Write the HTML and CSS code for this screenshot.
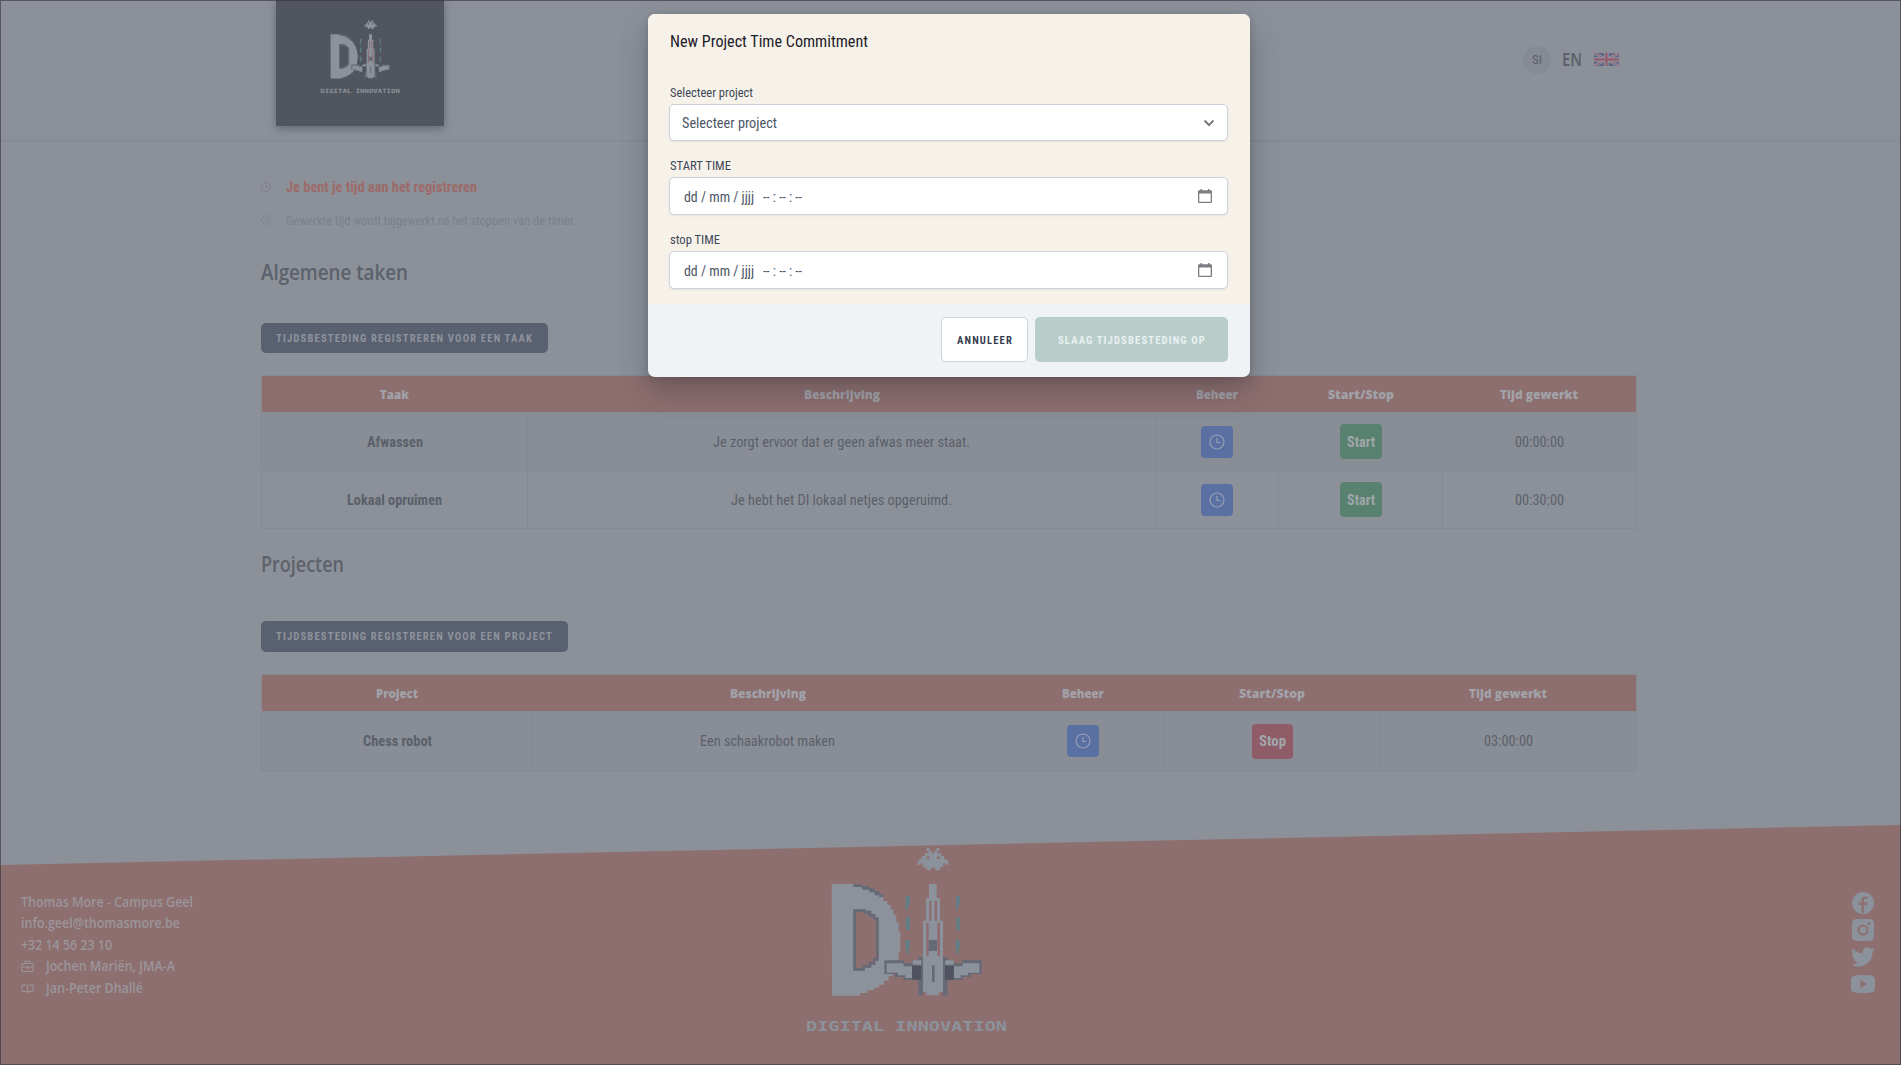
FILE: index.html
```html
<!DOCTYPE html>
<html lang="nl">
<head>
<meta charset="utf-8">
<title>Digital Innovation</title>
<link rel="stylesheet" href="styles.css">
</head>
<body>
<svg class="defs" aria-hidden="true">
  <symbol id="logo" viewBox="0 0 780 675">
    <path class="logo-fill" fill-rule="evenodd" d="M155 192h65v6h25v7h22v8h16v9h14v9h13v12h12v12h10v14h9v16h8v22h7v28h5v60h-5v25h-8v30h-10v18h-12v14h-14v12h-15v9h-15v8h-20v8h-22v8h-84zM220 268v184h34v-9h20v-9h12v-12h10v-130h-10v-10h-12v-10h-16v-4z"/>
    <path class="logo-line" fill-rule="evenodd" d="M220 268h38v4h16v10h12v10h10v130h-10v12h-12v9h-20v9h-34zM228 276v168h20v-9h18v-9h14v-12h8v-114h-8v-10h-14v-9h-14v-5z"/>
    <path class="logo-line" d="M220 193h27v5h21v7h16v8h14v9h12v9h-12v-5h-14v-9h-16v-8h-21v-8h-27z"/>
    <path class="logo-line" d="M313 421h60v9h25v-9h17v-10h15v115h-15v-46h-45v-9h-25v-9h-32zM605 421h-60v9h-25v-9h-18v-10h-14v115h15v-46h45v-9h25v-9h32z"/>
    <path class="logo-dark" d="M396 437h28v42h-28zM495 437h26v42h-26z"/>
    <path class="logo-fill" d="M320 430h50v9h26v35h-20v-8h-22v-8h-34zM598 430h-50v9h-26v35h20v-8h22v-8h34zM398 421h26v13h-26zM496 421h25v13h-25z"/>
    <path class="logo-fill" d="M447 192h23v42h10v68h9v214h-11v10h-39v-10h-10v-214h9v-68h9z"/>
    <path class="logo-slot" d="M448 242h6v60h-6zM464 242h7v60h-7zM439 308h7v100h-7zM472 308h8v100h-8z"/>
    <path class="logo-line" d="M446 360h25v33h-25z"/><path class="logo-line" d="M456 436h8v50h-8z"/>
    <path class="logo-laser" d="M378 227h11v28h-5v14h-7zM378 292h11v38h-11zM376 360h13v28h-4v14h-6zM529 227h10v28h-5v14h-6zM529 292h10v38h-10zM527 360h12v28h-4v14h-6z"/>
    <path class="logo-fill" fill-rule="evenodd" d="M440 84H449V92H455V100H463V92H469V84H478V94H472V100H484V108H492V117H500V122H505V134H496V130H490V140H484V143H434V140H428V130H422V134H413V122H418V117H426V108H434V100H446V94H440zM440 109v8h8v-8zM471 109v8h8v-8zM440 143h13v8h-13zM466 143h14v8h-14z"/>
    <text class="logo-text" x="78" y="634" textLength="603" lengthAdjust="spacingAndGlyphs">DIGITAL INNOVATION</text>
  </symbol>
  <symbol id="clock" viewBox="0 0 16 16"><path fill="none" stroke="currentColor" stroke-width="1.2" d="M8 1a7 7 0 1 0 0 14A7 7 0 0 0 8 1M8 4v4.5h3.5"/></symbol>
  <symbol id="calendar" viewBox="0 0 14 14"><path fill="currentColor" fill-rule="evenodd" d="M2.5 0h1.5v1.3h6V0h1.500v1.300H13q1 0 1 1V13q0 1-1 1H1q-1 0-1-1V2.300q0-1 1-1h1.500zM1.300 4.500v8.200h11.400V4.500z"/></symbol>
</svg>

<div class="page">
  <header class="topbar">
    <a class="brand"><svg class="brand-logo"><use href="#logo"/></svg></a>
    <nav class="account">
      <span class="avatar"><span data-w="10">SI</span></span>
      <span class="lang" data-w="20">EN</span>
      <svg class="flag" viewBox="0 0 25 13"><path fill="#5f6482" d="M0 0h25v13H0z"/><path stroke="#9297a0" stroke-width="2.600" d="M0 0l25 13M25 0L0 13"/><path stroke="#955f70" d="M0 0l25 13M25 0L0 13"/><path stroke="#9297a0" stroke-width="4.500" d="M12.500 0v13M0 6.500h25"/><path stroke="#935f70" stroke-width="2.400" d="M12.500 0v13M0 6.500h25"/></svg>
    </nav>
  </header>

  <main class="content">
    <p class="note active"><svg><use href="#clock"/></svg><span data-w="191">Je bent je tijd aan het registreren</span></p>
    <p class="note hint"><svg><use href="#clock"/></svg><span data-w="290">Gewerkte tijd wordt bijgewerkt na het stoppen van de timer.</span></p>

    <h2><span data-w="147">Algemene taken</span></h2>
    <button class="register"><span data-w="257">TIJDSBESTEDING REGISTREREN VOOR EEN TAAK</span></button>
    <table>
      <colgroup><col class="t1"><col class="t2"><col class="t3"><col class="t4"><col></colgroup>
      <thead><tr><th><span data-w="29">Taak</span></th><th><span data-w="76">Beschrijving</span></th><th><span data-w="42">Beheer</span></th><th><span data-w="66">Start/Stop</span></th><th><span data-w="78">Tijd gewerkt</span></th></tr></thead>
      <tbody>
        <tr><td class="name"><span data-w="56">Afwassen</span></td><td><span data-w="257">Je zorgt ervoor dat er geen afwas meer staat.</span></td><td><button class="manage"><svg><use href="#clock"/></svg></button></td><td><button class="toggle start"><span data-w="28">Start</span></button></td><td><span data-w="49">00:00:00</span></td></tr>
        <tr><td class="name"><span data-w="95">Lokaal opruimen</span></td><td><span data-w="221">Je hebt het DI lokaal netjes opgeruimd.</span></td><td><button class="manage"><svg><use href="#clock"/></svg></button></td><td><button class="toggle start"><span data-w="28">Start</span></button></td><td><span data-w="49">00:30:00</span></td></tr>
      </tbody>
    </table>

    <h2 class="second"><span data-w="83">Projecten</span></h2>
    <button class="register"><span data-w="277">TIJDSBESTEDING REGISTREREN VOOR EEN PROJECT</span></button>
    <table class="projects">
      <colgroup><col class="p1"><col class="p2"><col class="p3"><col class="p4"><col></colgroup>
      <thead><tr><th><span data-w="42">Project</span></th><th><span data-w="76">Beschrijving</span></th><th><span data-w="42">Beheer</span></th><th><span data-w="66">Start/Stop</span></th><th><span data-w="78">Tijd gewerkt</span></th></tr></thead>
      <tbody>
        <tr><td class="name"><span data-w="69">Chess robot</span></td><td><span data-w="135">Een schaakrobot maken</span></td><td><button class="manage"><svg><use href="#clock"/></svg></button></td><td><button class="toggle stop"><span data-w="27">Stop</span></button></td><td><span data-w="49">03:00:00</span></td></tr>
      </tbody>
    </table>
  </main>

  <footer class="footer">
    <ul class="contact">
      <li><span data-w="172">Thomas More - Campus Geel</span></li>
      <li><span data-w="159">info.geel@thomasmore.be</span></li>
      <li><span data-w="91">+32 14 56 23 10</span></li>
      <li><svg viewBox="0 0 13 12"><path fill="none" stroke="currentColor" d="M1 3.500h11v8H1zM4 3V1h5v2M1 7h11M5 8h3"/></svg><span data-w="129">Jochen Mariën, JMA-A</span></li>
      <li><svg viewBox="0 0 13 12"><path fill="none" stroke="currentColor" d="M1 9.500V3h3.500q2 0 2 1.500Q6.500 3 8.500 3H12v6.500H8l-1.500 1L5 9.500zM6.500 5v5"/></svg><span data-w="97">Jan-Peter Dhallé</span></li>
    </ul>
    <svg class="footer-logo"><use href="#logo"/></svg>
    <div class="social">
      <svg viewBox="0 0 24 24"><path fill-rule="evenodd" d="M12 1a11 11 0 1 0 0 22A11 11 0 0 0 12 1zM10.500 22v-8H7.500v-2.500h3V9q0-3.500 3.500-3.500h2.500v2.200H14.500q-1.700 0-1.700 1.700v2.100h3.500L15.900 14h-3.100v8z"/></svg>
      <svg viewBox="0 0 24 24"><path fill-rule="evenodd" d="M6 1h12q5 0 5 5v12q0 5-5 5H6q-5 0-5-5V6q0-5 5-5zm6 5.500a5.500 5.500 0 1 0 0 11 5.500 5.500 0 0 0 0-11zm0 2a3.500 3.500 0 1 1 0 7 3.500 3.500 0 0 1 0-7zM18 4a1.500 1.500 0 1 0 0 3 1.500 1.500 0 0 0 0-3z"/></svg>
      <svg viewBox="0 0 24 24"><path d="M24 4.600a10 10 0 0 1-2.800.8 5 5 0 0 0 2.100-2.700 10 10 0 0 1-3.100 1.200 4.900 4.900 0 0 0-8.400 4.500A14 14 0 0 1 1.700 3.200a4.900 4.900 0 0 0 1.500 6.500A5 5 0 0 1 1 9.100a4.900 4.900 0 0 0 3.900 4.900 5 5 0 0 1-2.200.1 4.900 4.900 0 0 0 4.600 3.400A9.900 9.900 0 0 1 0 19.500 14 14 0 0 0 21.500 7.100 10 10 0 0 0 24 4.600z"/></svg>
      <svg viewBox="0 0 24 24"><path fill-rule="evenodd" d="M4 3.500q8-1 16 0 4 .5 4 4.500v8q0 4-4 4.500-8 1-16 0-4-.5-4-4.500V8q0-4 4-4.500zM9.500 8v8l6.500-4z"/></svg>
    </div>
  </footer>
</div>

<div class="frame"></div>

<section class="modal">
  <div class="modal-body">
    <h1><span data-w="198">New Project Time Commitment</span></h1>
    <label><span data-w="83">Selecteer project</span></label>
    <div class="field select"><span data-w="95">Selecteer project</span><svg class="chevron" viewBox="0 0 12 8"><path fill="none" stroke="currentColor" stroke-width="2" d="M1.500 1.500L6 6l4.500-4.500"/></svg></div>
    <label><span data-w="61">START TIME</span></label>
    <div class="field date"><span data-w="70">dd / mm / jjjj</span><span class="time" data-w="39">-- : -- : --</span><svg class="cal"><use href="#calendar"/></svg></div>
    <label><span data-w="50">stop TIME</span></label>
    <div class="field date"><span data-w="70">dd / mm / jjjj</span><span class="time" data-w="39">-- : -- : --</span><svg class="cal"><use href="#calendar"/></svg></div>
  </div>
  <div class="modal-actions">
    <button class="cancel"><span data-w="56">ANNULEER</span></button>
    <button class="save"><span data-w="148">SLAAG TIJDSBESTEDING OP</span></button>
  </div>
</section>
<script src="fit.js"></script>
</body>
</html>
```
FILE: styles.css
```css
* { box-sizing: border-box; margin: 0; padding: 0; }
body { width: 1901px; height: 1065px; overflow: hidden; background: #8c9199; color: #5b606a;
  font-family: "Roboto Condensed", Roboto, sans-serif; font-stretch: condensed; font-size: 15px; }
button { border: 0; font: inherit; display: inline-flex; align-items: center; justify-content: center; }
[data-w] { display: inline-block; white-space: nowrap; transform-origin: 0 50%; flex: none; }
.defs { position: absolute; width: 0; height: 0; }
.page { display: flex; flex-direction: column; height: 1065px; }

.topbar { height: 142px; flex: none; border-bottom: 2px solid #868b94; display: flex; justify-content: space-between; padding: 0 282px 0 276px; }
.brand { width: 168px; height: 126px; background: #50555e; box-shadow: 0 3px 8px rgba(60, 65, 75, .5); display: flex; justify-content: center; padding: 9px 0 0 2px; }
.brand-logo { width: 103px; height: 89px; }
.logo-fill { fill: #8c929b; }
.logo-line { fill: #666a77; }
.logo-dark { fill: #50535f; }
.logo-slot { fill: #8e6c6e; }
.logo-laser { fill: #5f7f87; }
.logo-text { font: bold 44px "DejaVu Sans Mono", monospace; fill: #8c929b; }
.account { display: flex; align-items: center; height: 119px; }
.avatar { width: 28px; height: 28px; border-radius: 50%; background: #868b93; display: flex; align-items: center; justify-content: center; font-size: 13px; margin-right: 11px; }
.lang { font: 600 17px "Noto Sans", sans-serif; color: #5c616b; }
.flag { width: 25px; height: 13px; margin-left: 12px; }

.content { width: 1376px; margin-left: 261px; padding-top: 34px; height: 683px; flex: none; }
.note { display: flex; align-items: center; height: 22px; }
.note svg { width: 10px; height: 10px; margin: 0 15px 0 0; color: #7b8089; }
.note.active { color: #9c6a69; font-weight: 700; }
.note.active svg { color: #7d7780; }
.note.hint { margin-top: 11px; color: #7a8089; font-size: 13px; }
h2 { font: 600 22px/30px "Open Sans", sans-serif; color: #5c616b; margin-top: 25px; height: 30px; }
.register { height: 30px; background: #596070; color: #8e939c; border-radius: 5px; padding: 0 15px; margin-top: 37px; font-size: 11px; font-weight: 700; letter-spacing: 1.2px; display: flex; }
table { width: 1376px; border-collapse: collapse; table-layout: fixed; margin-top: 22px; border: 1px solid #858a92; }
.t1 { width: 266px; } .t2 { width: 628px; } .t3 { width: 123px; } .t4 { width: 164px; }
.p1 { width: 271px; } .p2 { width: 470px; } .p3 { width: 161px; } .p4 { width: 217px; }
th { height: 37px; background: #8e6f6f; color: #a1a2aa; font: 800 13px "Open Sans", sans-serif; text-align: center; vertical-align: middle; }
td { height: 58px; border: 1px solid #858a92; text-align: center; vertical-align: middle; line-height: 18px; }
.projects td { height: 59px; }
tbody tr:nth-child(odd) { background: #898e96; }
td.name { font-weight: 700; }
td button { vertical-align: middle; border-radius: 4px; }
.manage { width: 32px; height: 32px; background: #5b70a2; color: #979fb5; }
.manage svg { width: 16px; height: 16px; }
.toggle { height: 35px; padding: 0 7px; color: #a0a6ab; font-weight: 700; }
.start { background: #588170; }
.stop { background: #8f5c68; }
h2.second { margin-top: 19px; }
.second + .register { margin-top: 43px; height: 31px; }

.footer { flex: 1; background: #8e6f6f; clip-path: polygon(0 40px, 100% 0, 100% 100%, 0 100%); display: flex; justify-content: space-between; align-items: flex-start; color: #9a959b; }
.contact { list-style: none; width: 759px; padding: 66px 0 0 21px; font: 600 13.500px "Open Sans", sans-serif; }
.contact li { display: flex; align-items: center; height: 21.500px; }
.contact svg { width: 13px; height: 12px; margin-right: 12px; }
.footer-logo { width: 260px; height: 225px; margin: -5px 0 0 21px; }
.social { margin: 66px 26px 0 auto; display: flex; flex-direction: column; gap: 3px; fill: #8c929c; }
.social svg { width: 24px; height: 24px; }

.frame { position: absolute; inset: 0; border: 1px solid rgba(50, 45, 58, .6); }

.modal { position: absolute; left: 648px; top: 14px; width: 602px; height: 363px; border-radius: 7px; overflow: hidden; background: #f0f3f6; box-shadow: 0 14px 30px rgba(40, 40, 50, .32), 0 2px 6px rgba(40, 40, 50, .2); color: #3e4757; display: flex; flex-direction: column; }
.modal-body { height: 290px; background: #f7f2e9; padding: 15px 22px 0 21px; }
h1 { font-size: 17px; font-weight: 400; line-height: 24px; height: 53px; color: #1c2028; padding-left: 1px; }
label { display: block; height: 20px; line-height: 21px; font-size: 13px; padding-left: 1px; }
.field { height: 38px; border: 1px solid #c9d1da; border-radius: 5px; background: #fff; box-shadow: 0 1px 2px rgba(0, 0, 0, .07); display: flex; align-items: center; padding: 1px 15px 0 14px; margin: 2px 0 14px; color: #4b5565; }
.field.select { height: 37px; padding: 0 12px 0 12px; }
.field svg { margin-left: auto; color: #7b7d83; flex: none; }
.chevron { width: 12px; height: 8px; }
.cal { width: 14px; height: 14px; position: relative; top: -1px; }
.time { margin-left: 9px; }
.modal-actions { display: flex; justify-content: flex-end; gap: 7px; padding: 13px 22px 0; }
.modal-actions button { height: 45px; border-radius: 5px; font-size: 11px; font-weight: 700; letter-spacing: 1.200px; padding-top: 1px; }
.cancel { width: 87px; background: #fff; border: 1px solid #ccd3db; color: #363d50; }
.save { width: 193px; background: #b8cdca; color: #e9f0f2; }
```
FILE: fit.js
```js
// Condense each label to its design width while keeping it in the flow.
document.querySelectorAll('[data-w]').forEach(function (el) {
  var natural = el.getBoundingClientRect().width;
  var target = Number(el.dataset.w);
  var gap = parseFloat(getComputedStyle(el).marginRight) || 0;
  el.style.transform = 'scaleX(' + target / natural + ')';
  el.style.marginRight = gap + target - natural + 'px';
});
```
